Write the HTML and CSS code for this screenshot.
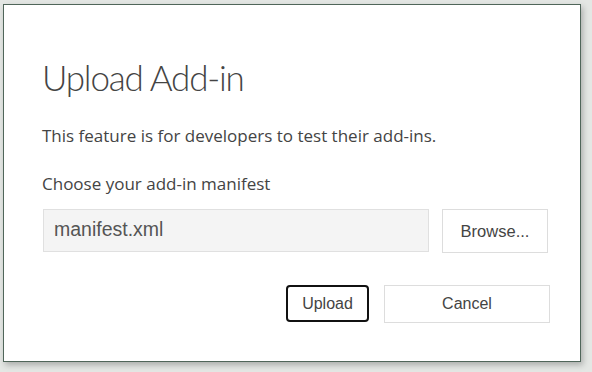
FILE: index.html
```html
<!DOCTYPE html>
<html lang="en">
<head>
    <meta charset="UTF-8">
    <meta name="viewport" content="width=device-width, initial-scale=1.0">
    <title>Upload Add-in</title>
    <link rel="stylesheet" href="styles.css">
</head>
<body>
    <div class="dialog">
        <h1 class="dialog-title">Upload Add-in</h1>
        <p class="dialog-text">This feature is for developers to test their add-ins.</p>
        <p class="dialog-label">Choose your add-in manifest</p>

        <div class="file-row">
            <div class="file-name">manifest.xml</div>
            <button type="button" class="btn btn-browse">Browse...</button>
        </div>

        <div class="actions">
            <button type="button" class="btn btn-upload">Upload</button>
            <button type="button" class="btn btn-cancel">Cancel</button>
        </div>
    </div>
</body>
</html>
```

FILE: styles.css
```css
/* General Styles */
body {
    margin: 0;
    background-color: #e4e7e4;
    width: 592px;
    height: 372px;
    overflow: hidden;
}

.dialog {
    box-sizing: border-box;
    width: 578px;
    height: 358px;
    margin: 4px 0 0 3px;
    background: #fff;
    border: 1px solid #50665a;
    box-shadow: 2px 3px 6px rgba(0, 0, 0, 0.25);
    padding: 0 30px 0 38px;
    font-family: "Open Sans", "Segoe UI", sans-serif;
    color: #444;
}

.dialog-title {
    margin: 46px 0 0 0;
    font-family: Lato, "Segoe UI", sans-serif;
    font-size: 35px;
    font-weight: 300;
    line-height: 52px;
    letter-spacing: -1.2px;
}

.dialog-text {
    margin: 22px 0 0 0;
    font-size: 17px;
    line-height: 22px;
}

.dialog-label {
    margin: 26px 0 0 0;
    font-size: 17px;
    line-height: 22px;
}

.file-row {
    display: flex;
    margin-top: 14px;
    margin-left: 1px;
}

.file-name {
    box-sizing: border-box;
    width: 386px;
    height: 43px;
    padding: 0 10px;
    background: #f4f4f4;
    border: 1px solid #e0e0e0;
    font-family: "Liberation Sans", Arial, sans-serif;
    font-size: 19.5px;
    line-height: 39px;
    color: #555;
}

.btn {
    box-sizing: border-box;
    background: #fff;
    border: 1px solid #ddd;
    font-family: "Liberation Sans", Arial, sans-serif;
    font-size: 16px;
    color: #444;
    padding: 0;
    cursor: pointer;
}

.btn-browse {
    width: 106px;
    height: 44px;
    margin-left: 13px;
    font-size: 16.5px;
}

.actions {
    display: flex;
    justify-content: flex-end;
    gap: 15px;
    margin-top: 32px;
}

.btn-upload {
    width: 83px;
    height: 37px;
    border: 2px solid #111;
    border-radius: 4px;
}

.btn-cancel {
    width: 166px;
    height: 38px;
}
```
